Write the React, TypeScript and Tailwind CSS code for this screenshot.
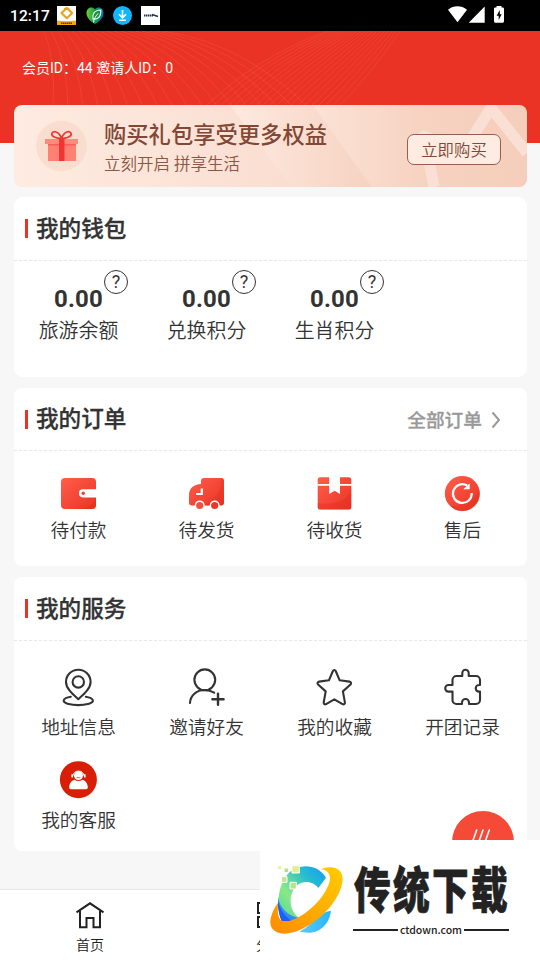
import type { ReactNode } from "react";

type ItemType = { name: string; icon: ReactNode };

const wallet = [
  { name: "旅游余额", value: "0.00" },
  { name: "兑换积分", value: "0.00" },
  { name: "生肖积分", value: "0.00" },
];

const orders: ItemType[] = [
  {
    name: "待付款",
    icon: (
      <>
        <rect x="1" y="2" width="35" height="31" rx="4" fill="url(#red)" />
        <path d="M36 12v9c-2 8-9 12-20 12h16a4 4 0 0 0 4-4z" fill="#e02a1c" opacity=".45" />
        <path d="M36.5 13.200H23a4.100 4.100 0 0 0 0 8.200h13.500z" fill="#fff" />
        <circle cx="23.200" cy="17.300" r="1.700" fill="#f0402f" />
      </>
    ),
  },
  {
    name: "待发货",
    icon: (
      <>
        <path d="M16 2h17a3 3 0 0 1 3 3v21.500a3 3 0 0 1-3 3H4a3 3 0 0 1-3-3V19C1 12 6 8.500 13 8V5a3 3 0 0 1 3-3z" fill="url(#red)" />
        <path d="M33 2c1 13-6 22-17 27.500h17a3 3 0 0 0 3-3V5a3 3 0 0 0-3-3z" fill="#e02a1c" opacity=".3" />
        <path d="M13.800 12.500v5.500H8.200" fill="none" stroke="#fff" strokeWidth="2.200" />
        <circle cx="11.700" cy="29.300" r="4.900" fill="#fff" />
        <circle cx="26.700" cy="29.300" r="4.900" fill="#fff" />
        <circle cx="11.700" cy="29.500" r="3.600" fill="#f4503f" />
        <circle cx="26.700" cy="29.500" r="3.600" fill="#ea3526" />
      </>
    ),
  },
  {
    name: "待收货",
    icon: (
      <>
        <rect x="1.700" y="1.200" width="33.600" height="32.400" rx="2.500" fill="url(#red)" />
        <path d="M35.300 12c-2 11-15 18-33.600 15v4a2.500 2.500 0 0 0 2.500 2.500h28.600a2.500 2.500 0 0 0 2.500-2.500z" fill="#e02a1c" opacity=".35" />
        <path d="M1.500 8.900h34" stroke="#fff" strokeWidth="1.900" />
        <path d="M13.200 1v17l5.400-3.200L24 18V1z" fill="#fff" />
      </>
    ),
  },
  {
    name: "售后",
    icon: (
      <>
        <circle cx="18.300" cy="17.500" r="17.500" fill="url(#red)" />
        <path d="M35.500 14C32 25 21 31 6 30a17.500 17.500 0 0 0 29.500-16z" fill="#e02a1c" opacity=".35" />
        <path d="M27.700 17a9.400 9.400 0 1 1-4.500-7.500" fill="none" stroke="#fff" strokeWidth="2.200" />
        <path d="M25.400 8v5h-5.600z" fill="#fff" stroke="#fff" strokeWidth=".6" />
      </>
    ),
  },
];

const services: ItemType[] = [
  {
    name: "地址信息",
    icon: (
      <>
        <path d="M20.300 31.200C14.500 26 8 20.500 8 14a12.300 12.300 0 0 1 24.600 0c0 6.500-6.500 12-12.300 17.200z" />
        <circle cx="20.300" cy="13.900" r="5.700" />
        <path d="M12.800 28.700C4.500 30 3.500 34 9.500 35.700c6 1.600 15.600 1.600 21.600 0 6-1.700 5-5.700-3.300-7" />
      </>
    ),
  },
  {
    name: "邀请好友",
    icon: (
      <>
        <circle cx="18.800" cy="11.800" r="10.400" />
        <path d="M4 35c.3-7.500 6.500-13 14.500-13 3.700 0 7 1 9.700 2.700" />
        <path d="M32 25.600v11.200M26.400 31.200h11.200" strokeWidth="2.400" />
      </>
    ),
  },
  {
    name: "我的收藏",
    icon: (
      <path d="M18.900 3c.7-1.400 2.100-1.400 2.800 0l4 9.300 9.800 1.300c1.600.3 2.100 1.800 1 2.900l-7.600 6.900 2 11c.2 1.600-1 2.400-2.400 1.700l-8.200-4.800-8.200 4.800c-1.400.7-2.600-.1-2.400-1.700l2-11-7.600-6.900c-1.100-1.100-.6-2.600 1-2.900l9.800-1.300z" />
    ),
  },
  {
    name: "开团记录",
    icon: (
      <path d="M14.500 8h5.800V5a3.200 3.200 0 0 1 6.400 0v3H34a4 4 0 0 1 4 4v5h-1a3.300 3.300 0 0 0 0 6.600h1V32a4 4 0 0 1-4 4h-7v-1.500a3.500 3.500 0 0 0-7 0V36h-5.500a4 4 0 0 1-4-4v-8.400H6.500a3.300 3.300 0 0 1 0-6.600h4v-5a4 4 0 0 1 4-4z" />
    ),
  },
  {
    name: "我的客服",
    icon: (
      <g stroke="none">
        <circle cx="20.400" cy="18.700" r="18.500" fill="#d81e06" />
        <circle cx="20.500" cy="14.500" r="4.500" fill="#fff" />
        <path d="M14.800 15a5.800 6 0 0 1 11.400 0" fill="none" stroke="#fff" strokeWidth="1" />
        <path d="M13.400 13.300h1.500v3.200h-1.500zM26.100 13.300h1.500v3.200h-1.500z" fill="#fff" />
        <path d="M19 16.700h3" stroke="#d81e06" strokeWidth=".7" />
        <path d="M16.500 18.800c2.300 1.600 5.700 1.600 8 0 3 .9 5.300 4 5.300 7.500 0 1.300-.6 1.900-1.800 1.900H13c-1.200 0-1.800-.6-1.800-1.900 0-3.500 2.300-6.600 5.300-7.500z" fill="#fff" />
      </g>
    ),
  },
];

function StatusBar() {
  return (
    <div className="flex h-[31px] shrink-0 items-center bg-black pl-[10px] text-white">
      <span className="w-[47px] pt-px text-[15.500px] leading-[31px] font-medium tracking-[0.100px]">12:17</span>
      <svg className="h-[31px] w-[110px]" viewBox="57 0 110 31">
        <path d="M57 6h19v19H57z" fill="#fff" />
        <path d="M57 20.500q9.500 1.500 19 0V25H57z" fill="#f2a900" />
        <path d="m66.800 8 5.300 5-5.300 5.200-5.300-5.200z" fill="none" stroke="#e9a323" strokeWidth="2.200" strokeLinejoin="round" />
        <path d="M64 8.500h5.500" stroke="#e9a323" strokeWidth="1.300" />
        <path d="M61 23.300h11" stroke="#52370a" strokeWidth="1.600" strokeDasharray="1.500 .5" />
        <path d="M95 24c-4-2.500-8.500-6-8.500-11 0-5.500 6-7.300 8.500-3.500 2.500-3.800 8.500-2 8.500 3.500 0 5-4.500 8.500-8.500 11z" fill="url(#heart)" />
        <path d="M100.800 10c-7 .5-8.500 4-7.800 9 5 .5 8-2 7.800-9z" fill="#15963d" stroke="#fff" strokeWidth="1.200" />
        <path d="M98 13.500c-2.500 3-4 5-4.500 9" fill="none" stroke="#fff" strokeWidth="1" />
        <circle cx="122.500" cy="15.500" r="9.500" fill="#12b7fb" />
        <path d="M122.500 10v7.500M119 14.300l3.500 3.600 3.500-3.600M119 20.300h7" fill="none" stroke="#fff" strokeWidth="1.600" />
        <path d="M141 6h19v19h-19z" fill="#fff" />
        <path d="M144 15.500h9" stroke="#26334f" strokeWidth="2" strokeDasharray="1.500 .5" />
        <path d="m152 14.500 6 2" stroke="#26334f" strokeWidth="1.500" />
      </svg>
      <svg className="ml-auto h-[31px] w-[100px]" viewBox="440 0 100 31" fill="#fff">
        <path d="M448 9.800c5.500-4.600 13.500-4.600 19 0l-9.500 12.500zM484.700 6.500v16.200h-16zM496.500 6v1.500h-1.300q-1.200 0-1.200 1.200v12.600q0 1.400 1.200 1.400h7.600q1.200 0 1.200-1.400V8.700q0-1.200-1.200-1.200h-1.300V6z" />
        <path d="m499.800 10-3.200 5.800h2.100v4.200l3-5.800h-1.900z" fill="#000" />
      </svg>
    </div>
  );
}

function Header() {
  return (
    <div className="relative h-[112px] shrink-0 bg-[#ea3324]">
      <svg className="absolute inset-0 h-full w-full" viewBox="0 31 540 112" fill="none" stroke="#ff8d75">
        {Array.from({ length: 18 }, (_, i) => (
          <path
            key={i}
            d={`M${44 + i * 7} 31Q${56 + i * 11} ${60 - i} ${53 + i * 15} 107`}
            strokeWidth=".8"
            opacity=".22"
          />
        ))}
        {Array.from({ length: 20 }, (_, i) => (
          <path
            key={i}
            d={`M${400 - i * 3.8} 31Q${370 - i * 6} ${76 - i} ${338 - i * 7} 107`}
            strokeWidth=".8"
            opacity=".22"
          />
        ))}
      </svg>
      <p className="relative pt-[27px] pl-[22px] text-[14px] leading-5 text-white">会员ID：44 邀请人ID：0</p>
    </div>
  );
}

function Banner() {
  return (
    <div className="relative -mt-[38px] flex h-[82px] shrink-0 overflow-hidden rounded-[8px] bg-linear-to-r from-[#feebe1] via-[#fadfd2] to-[#f5cfbc]">
      <svg className="absolute inset-0 h-full w-full" viewBox="14 105 513 82">
        <path d="M230 105h82l60 82H292z" fill="url(#shine)" />
        <path d="M313 105h214v82H372z" fill="url(#shine2)" />
        <path d="M434 187 424 136l39 16 28-44 36 45" fill="none" stroke="#fae0d4" strokeWidth="11" strokeLinejoin="round" />
      </svg>
      <svg className="relative mt-[15px] ml-[22px] h-[52px] w-[52px]" viewBox="36 120 52 52">
        <circle cx="61.500" cy="146" r="25.300" fill="#f9ddce" />
        <path d="M48 143h28v18H48z" fill="#ff8173" />
        <path d="M45 139h33v5H45z" fill="#ff8b7d" />
        <path d="M48 144h28v1.500H48z" fill="#fa6156" />
        <path d="M59 139h5.500v22H59z" fill="#f33435" />
        <path d="M61.500 138.500c-4.500 0-10-1.700-9.700-4.500.5-4.200 7.500-2.500 9.700 4.500 2.200-7 9.200-8.700 9.700-4.500.3 2.800-5.200 4.500-9.700 4.500z" fill="none" stroke="#f33435" strokeWidth="1.700" />
      </svg>
      <div className="relative ml-4 pt-[14px] text-[#824735]">
        <h2 className="text-[22.300px] leading-8 font-medium">购买礼包享受更多权益</h2>
        <p className="mt-[2px] text-[16.500px] leading-6 font-[350] text-[#8d5543]">立刻开启 拼享生活</p>
      </div>
      <button className="relative mt-[29px] mr-[26px] ml-auto h-[31px] w-[94px] rounded-[7px] border border-[#945f4d] bg-[#feebe1] pt-[2px] text-[16.400px] leading-[27px] font-[350] text-[#824735]">
        立即购买
      </button>
    </div>
  );
}

function Title(props: { text: string; children?: ReactNode }) {
  return (
    <div className="flex flex-1 items-center pl-[11px]">
      <span className="h-[19px] w-[3px] bg-[#ea3324]" />
      <h3 className="ml-2 pt-[2px] text-[22.600px] leading-8 font-medium text-[#333] [-webkit-text-stroke:0.300px_#333]">
        {props.text}
      </h3>
      {props.children}
    </div>
  );
}

function Dashed() {
  return (
    <svg className="h-px w-full shrink-0" viewBox="0 0 513 1">
      <path d="M0 .5h513" stroke="#e8e8e8" strokeDasharray="3 2" />
    </svg>
  );
}

function Logo() {
  // drawn on a 3x grid, shifted by 30
  return (
    <svg className="h-[120px] w-[90px] shrink-0" viewBox="30 30 270 360">
      <path d="M228 143 205 174C188 150 150 148 131 178c-16 26-12 65 16 86-20 12-40 15-52 7-16-36-15-106 23-144 32-29 87-24 110 16z" fill="url(#ring)" />
      <path d="M84 200c4 30 24 55 63 64l-2 12-50-3c-8-20-12-45-11-73z" fill="#308bf4" />
      <path d="M84 212c6 28 22 48 44 62l-33 0c-8-20-12-40-11-62z" fill="#1d5ff0" />
      <path d="M148 304c35-13 58-58 95-62-4 34-28 66-68 66-10 0-18-1-27-4z" fill="url(#tail)" />
      <path d="M213 118c27-13 72-8 64 40-12 67-97 147-172 153-35 1-50-21-42-49 4-17 12-32 21-44-1 27-2 44 11 54 30 13 105-37 133-92 22-35 12-60-15-62z" fill="url(#gold)" />
      <g stroke="#fff" strokeWidth="3">
        <path d="M83 107h12v12H83z" fill="#e5f392" />
        <path d="M102 114h14v14h-14z" fill="#b5e47e" />
        <path d="M126 107h22v22h-22z" fill="#e1ef8b" />
        <path d="M94 140h17v17H94z" fill="#bde789" />
        <path d="M120 157h19v20h-19z" fill="#b9e486" />
      </g>
    </svg>
  );
}

export default function App() {
  return (
    <div className="relative flex h-[960px] w-[540px] flex-col overflow-hidden bg-[#f7f7f7] font-[Roboto,'Noto_Sans_CJK_SC',sans-serif]">
      <svg className="absolute h-0 w-0">
        <defs>
          <linearGradient id="red" x1="0" y1="0" x2="1" y2="1">
            <stop stopColor="#ff5e4b" />
            <stop offset="1" stopColor="#ea3324" />
          </linearGradient>
          <linearGradient id="heart">
            <stop stopColor="#72d12c" />
            <stop offset=".5" stopColor="#0b9e50" />
            <stop offset="1" stopColor="#0872b8" />
          </linearGradient>
          <linearGradient id="shine">
            <stop stopColor="#fff3ea" stopOpacity=".5" />
            <stop offset="1" stopColor="#f5cbb8" stopOpacity=".5" />
          </linearGradient>
          <linearGradient id="shine2">
            <stop stopColor="#fff3ea" stopOpacity=".3" />
            <stop offset=".5" stopColor="#f5cbb8" stopOpacity=".3" />
          </linearGradient>
          <linearGradient id="ring" x1="1" y1="0" x2="0" y2="1">
            <stop stopColor="#139bf0" />
            <stop offset=".3" stopColor="#26bdd0" />
            <stop offset=".65" stopColor="#8ae985" />
            <stop offset="1" stopColor="#4dd2a0" />
          </linearGradient>
          <linearGradient id="tail">
            <stop stopColor="#60c8ff" />
            <stop offset="1" stopColor="#23b8f8" />
          </linearGradient>
          <linearGradient id="gold" x1="1" y1="0" x2="0" y2="1">
            <stop stopColor="#ffcd00" />
            <stop offset="1" stopColor="#ff8a00" />
          </linearGradient>
        </defs>
      </svg>

      <StatusBar />
      <Header />

      <main className="flex flex-1 flex-col pr-[13px] pl-[14px]">
        <Banner />

        <section className="mt-[10px] flex h-[180px] shrink-0 flex-col rounded-[9px] bg-white">
          <Title text="我的钱包" />
          <Dashed />
          <div className="grid h-[116px] grid-cols-[repeat(4,128px)] pt-[22px]">
            {wallet.map((item) => (
              <div key={item.name} className="relative pl-px text-center text-[#333]">
                <p className="text-[24px] leading-8 font-bold tracking-[0.200px]">{item.value}</p>
                <p className="pt-[2px] text-[19.900px] leading-[30px] font-[350] text-[#333]">{item.name}</p>
                <span className="absolute -top-[13px] left-[90px] h-6 w-6 rounded-full border border-[#333] text-[18px] leading-[22px]">
                  ?
                </span>
              </div>
            ))}
          </div>
        </section>

        <section className="mt-[11px] flex h-[178px] shrink-0 flex-col rounded-[8px] bg-white">
          <Title text="我的订单">
            <a className="mr-[25px] ml-auto flex items-center text-[18.700px] leading-8 font-medium text-[#999] [-webkit-text-stroke:0.300px_#999]">
              <span className="pt-[3px]">全部订单</span>
              <svg className="mt-[2px] ml-[8px] h-5 w-3" viewBox="0 0 12 20" fill="none" stroke="#999" strokeWidth="2">
                <path d="m2.500 2.500 6.500 7.500-6.500 7.500" />
              </svg>
            </a>
          </Title>
          <Dashed />
          <div className="grid h-[115px] grid-cols-[repeat(4,128px)] pt-[25px]">
            {orders.map((item) => (
              <div key={item.name} className="flex flex-col items-center">
                <svg className="h-9 w-9" viewBox="0 0 36 36">
                  {item.icon}
                </svg>
                <p className="mt-[5px] pl-px text-[18.700px] leading-7 font-[350] text-[#333]">{item.name}</p>
              </div>
            ))}
          </div>
        </section>

        <section className="mt-[11px] flex h-[274px] shrink-0 flex-col rounded-[8px] bg-white">
          <Title text="我的服务" />
          <Dashed />
          <div className="grid h-[210px] grid-cols-[repeat(4,128px)] grid-rows-[73px_73px] gap-y-5 pt-[27px]">
            {services.map((item) => (
              <div key={item.name} className="flex flex-col items-center">
                <svg className="h-10 w-10 shrink-0" viewBox="0 0 40 40" fill="none" stroke="#333" strokeWidth="2.100" strokeLinecap="round" strokeLinejoin="round">
                  {item.icon}
                </svg>
                <p className="mt-[6px] pl-px text-[18.700px] leading-7 font-[350] text-[#333]">{item.name}</p>
              </div>
            ))}
          </div>
        </section>
      </main>

      <nav className="grid h-[71px] shrink-0 grid-cols-3 border-t border-[#e8e8e8] bg-white text-[14px] font-[350] text-[#222]">
        <a className="flex flex-col items-center pt-[10px]">
          <svg className="h-8 w-8" viewBox="0 0 32 32" fill="none" stroke="#222" strokeWidth="2">
            <path d="M2.500 12.300 16 3.300l13.500 9M6 11v16.200h6.500V18h7v9.200H26V11" />
          </svg>
          <span className="mt-[3px] leading-5">首页</span>
        </a>
        <a className="flex flex-col items-center pt-[10px]">
          <svg className="h-8 w-8" viewBox="0 0 32 32" fill="none" stroke="#222" strokeWidth="2">
            <path d="M4 3h10v10H4zM18 3h10v10H18zM4 17h10v10H4zM18 17h10v10H18z" />
          </svg>
          <span className="mt-[3px] leading-5">分类</span>
        </a>
      </nav>

      <div className="absolute top-[811px] left-[452px] h-[62px] w-[62px] rounded-full bg-[#f64a39]">
        <svg className="h-full w-full" viewBox="0 0 62 62" stroke="#fff" strokeWidth="1.600" strokeLinecap="round">
          <path d="m24.700 19-5 14M31 19l-5 14M37.300 19l-5 14" />
        </svg>
      </div>

      <div className="absolute top-[840px] left-[260px] flex h-[120px] w-[280px] bg-white text-[#222]">
        <Logo />
        <div className="w-[162px] pt-[22px]">
          <p className="h-[60px] origin-top-left translate-x-[4px] scale-x-[0.940] scale-y-[1.240] text-[39px] leading-[48px] font-black tracking-[2.500px] whitespace-nowrap [-webkit-text-stroke:0.600px_#222]">
            传统下载
          </p>
          <div className="ml-[3px] flex w-[156px] items-center justify-between">
            <span className="h-[2px] w-[45px] bg-[#222]" />
            <span className="font-['Noto_Sans_CJK_SC',sans-serif] text-[10.500px] leading-4 font-medium">ctdown.com</span>
            <span className="h-[2px] w-[45px] bg-[#222]" />
          </div>
        </div>
      </div>
    </div>
  );
}
